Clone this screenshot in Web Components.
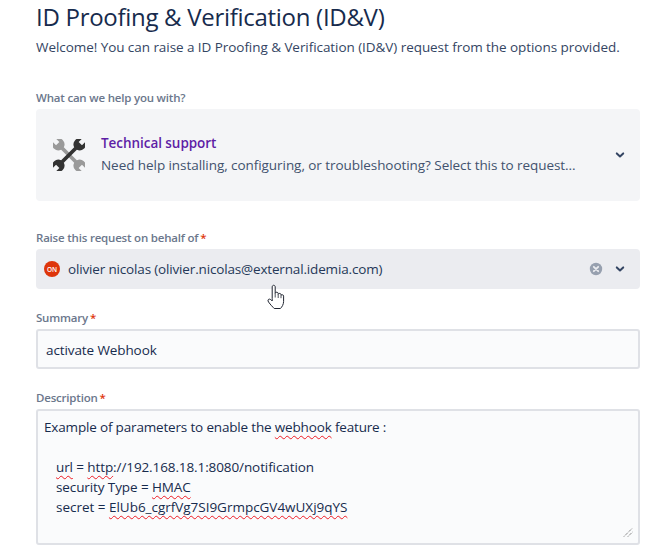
<!DOCTYPE html>
<html lang="en">
<head>
<meta charset="utf-8">
<title>ID Proofing &amp; Verification (ID&amp;V)</title>
<style>
  html, body { margin: 0; background: #fff; }
  body { font-family: "Open Sans", "Noto Sans", sans-serif; color: #172b4d; height: 557px; overflow: hidden; position: relative; }
</style>
</head>
<body>
<portal-page>
  <portal-header heading="ID Proofing &amp; Verification (ID&amp;V)">Welcome! You can raise a ID Proofing &amp; Verification (ID&amp;V) request from the options provided.</portal-header>
  <form-field label="What can we help you with?" style="--gap-top:33px">
    <request-type heading="Technical support">Need help installing, configuring, or troubleshooting? Select this to request...</request-type>
  </form-field>
  <form-field label="Raise this request on behalf of" required style="--gap-top:29px">
    <user-select initials="ON">olivier nicolas (olivier.nicolas@external.idemia.com)</user-select>
  </form-field>
  <form-field label="Summary" required style="--gap-top:21px">
    <text-box>activate Webhook</text-box>
  </form-field>
  <form-field label="Description" required style="--gap-top:21px">
    <text-area>
      <div style="letter-spacing:-.17px">Example of parameters to enable the <u>webhook</u> feature :</div>
      <div>&nbsp;</div>
      <div class="in"><u>url</u> = <u>http</u>://192.168.18.1:8080/notification</div>
      <div class="in">security Type = <u>HMAC</u></div>
      <div class="in" style="letter-spacing:-.02px">secret = <u>ElUb6_cgrfVg7SI9GrmpcGV4wUXj9qYS</u></div>
    </text-area>
  </form-field>
</portal-page>
<hand-cursor></hand-cursor>

<script>
// Contenedor de la pagina
class PortalPage extends HTMLElement {
  constructor() {
    super();
    this.attachShadow({ mode: "open" });
    this.shadowRoot.innerHTML = `
      <style>
        :host { display: block; width: 604px; padding: 0 29px 0 36px; }
      </style>
      <slot></slot>`;
  }
}

// Titulo y texto de bienvenida
class PortalHeader extends HTMLElement {
  constructor() {
    super();
    this.attachShadow({ mode: "open" });
    this.shadowRoot.innerHTML = `
      <style>
        :host { display: block; }
        h1 { margin: 0; padding-top: 1px; font-size: 24px; line-height: 32px; font-weight: 400; letter-spacing: -.29px; color: #172b4d; white-space: nowrap; }
        p { margin: 4px 0 0; font-size: 13.5px; line-height: 20px; letter-spacing: -.06px; color: #344563; white-space: nowrap; }
      </style>
      <h1></h1>
      <p><slot></slot></p>`;
  }
  connectedCallback() {
    this.shadowRoot.querySelector("h1").textContent = this.getAttribute("heading");
  }
}

// Etiqueta del campo con asterisco opcional
class FormField extends HTMLElement {
  constructor() {
    super();
    this.attachShadow({ mode: "open" });
    this.shadowRoot.innerHTML = `
      <style>
        :host { display: block; padding-top: var(--gap-top, 20px); }
        .label { font-size: 11.5px; line-height: 16px; font-weight: 600; letter-spacing: -.2px; color: #6b778c; margin-bottom: 3px; white-space: nowrap; }
        .req { color: #de350b; margin-left: 2px; }
      </style>
      <div class="label"><span class="txt"></span><span class="req"></span></div>
      <slot></slot>`;
  }
  connectedCallback() {
    this.shadowRoot.querySelector(".txt").textContent = this.getAttribute("label");
    if (this.hasAttribute("required")) this.shadowRoot.querySelector(".req").textContent = "*";
  }
}

const CHEVRON = `<svg width="16" height="16" viewBox="0 0 16 16"><path d="M4.800 6.400 8 9.400l3.200-3" fill="none" stroke="#344563" stroke-width="2" stroke-linecap="round" stroke-linejoin="round"/></svg>`;

const WRENCH = "M-9.8-2H9.8A6.5 6.5 0 0 1 22-2.5H17V2.5H22A6.5 6.5 0 0 1 9.8 2H-9.8A6.5 6.5 0 0 1-22 2.5H-17V-2.5H-22A6.5 6.5 0 0 1-9.8-2Z";

// Selector del tipo de solicitud
class RequestType extends HTMLElement {
  constructor() {
    super();
    this.attachShadow({ mode: "open" });
    this.shadowRoot.innerHTML = `
      <style>
        :host { display: flex; align-items: center; height: 92px; box-sizing: border-box; background: #f4f5f7; border-radius: 4px; padding: 0 12px 0 17px; }
        svg.icon { flex: none; margin-right: 16px; }
        .body { flex: 1; min-width: 0; padding-bottom: 3px; }
        .title { font-size: 13.5px; line-height: 20px; font-weight: 600; letter-spacing: -.05px; color: #5e1ea6; }
        .desc { font-size: 13.5px; line-height: 20px; margin-top: 2px; letter-spacing: -.06px; color: #42526e; white-space: nowrap; overflow: hidden; }
        .chev { flex: none; display: flex; }
      </style>
      <svg class="icon" width="32" height="32" viewBox="-17 -17 34 34">
        <path d="${WRENCH}" fill="#9a9a9a" transform="rotate(45)"/>
        <path d="${WRENCH}" fill="#333" transform="rotate(-45)"/>
      </svg>
      <div class="body">
        <div class="title"></div>
        <div class="desc"><slot></slot></div>
      </div>
      <span class="chev">${CHEVRON}</span>`;
  }
  connectedCallback() {
    this.shadowRoot.querySelector(".title").textContent = this.getAttribute("heading");
  }
}

// Selector de usuario con avatar
class UserSelect extends HTMLElement {
  constructor() {
    super();
    this.attachShadow({ mode: "open" });
    this.shadowRoot.innerHTML = `
      <style>
        :host { display: flex; align-items: center; height: 40px; box-sizing: border-box; background: #ebecf0; border-radius: 4px; padding: 0 12px 0 8px; font-size: 13.5px; letter-spacing: -.16px; color: #253858; }
        .avatar { flex: none; width: 16px; height: 16px; border-radius: 50%; background: #de350b; color: #fff; font-size: 6.5px; font-weight: 600; letter-spacing: 0; display: flex; align-items: center; justify-content: center; margin-right: 8px; }
        .name { flex: 1; white-space: nowrap; overflow: hidden; }
        .clear { flex: none; display: flex; margin-right: 8px; }
        .chev { flex: none; display: flex; }
      </style>
      <span class="avatar"></span>
      <span class="name"><slot></slot></span>
      <span class="clear"><svg width="16" height="16" viewBox="0 0 16 16"><circle cx="8" cy="8" r="6.2" fill="#97a0af"/><path d="M5.8 5.8l4.4 4.4m0-4.4-4.4 4.4" stroke="#ebecf0" stroke-width="1.8" stroke-linecap="round"/></svg></span>
      <span class="chev">${CHEVRON}</span>`;
  }
  connectedCallback() {
    this.shadowRoot.querySelector(".avatar").textContent = this.getAttribute("initials");
  }
}

// Campo de texto de una linea
class TextBox extends HTMLElement {
  constructor() {
    super();
    this.attachShadow({ mode: "open" });
    this.shadowRoot.innerHTML = `
      <style>
        :host { display: flex; align-items: center; height: 40px; box-sizing: border-box; background: #fafbfc; border: 2px solid #dfe1e6; border-radius: 3px; padding: 1px 8px 0; font-size: 13.5px; letter-spacing: -.1px; color: #172b4d; }
      </style>
      <slot></slot>`;
  }
}

// Area de texto con marcas de ortografia
class TextArea extends HTMLElement {
  constructor() {
    super();
    this.attachShadow({ mode: "open" });
    this.shadowRoot.innerHTML = `
      <style>
        :host { display: block; position: relative; height: 136px; box-sizing: border-box; background: #fafbfc; border: 2px solid #dfe1e6; border-radius: 3px; padding: 6px 6px; font-size: 13.5px; line-height: 20px; letter-spacing: -.1px; color: #172b4d; white-space: nowrap; }
        ::slotted(div) { height: 20px; }
        ::slotted(.in) { padding-left: 12px; }
        .grip { position: absolute; right: 5px; bottom: 6px; }
      </style>
      <slot></slot>
      <svg class="grip" width="10" height="10" viewBox="0 0 10 10"><path d="M1 9.5 9.500 1M5 9.500 9.500 5" stroke="#555" stroke-width="1" stroke-dasharray="1 1" fill="none"/></svg>`;
  }
}

// Puntero de mano sobre el selector de usuario
class HandCursor extends HTMLElement {
  constructor() {
    super();
    this.attachShadow({ mode: "open" });
    this.shadowRoot.innerHTML = `
      <style>
        :host { position: absolute; left: 267px; top: 284px; width: 18px; height: 26px; display: block; }
      </style>
      <svg width="18" height="26" viewBox="0 0 18 26"><path d="M5.2 14.5V3c0-2.3 3-2.3 3 0v6.4c.2-1.6 2.9-1.6 3 0v1c.3-1.4 2.700-1.300 2.800.2v.8c.4-1 2.600-.9 2.600.7v5.300c0 3-1.600 5.600-3.200 7.100H7.200C5.700 23 3.600 20.800 1.600 18.100.4 16.500 1.100 15.100 2.400 15.100c.9 0 1.800.8 2.800 1.900z" fill="#fff" stroke="#1f2430" stroke-width="1" stroke-linejoin="round"/><path d="M8.200 9.500v4M11.200 10.400v3.600M14 11.400v2.800" stroke="#1f2430" stroke-width=".8" fill="none"/></svg>`;
  }
}

window.customElements.define("portal-page", PortalPage);
window.customElements.define("portal-header", PortalHeader);
window.customElements.define("form-field", FormField);
window.customElements.define("request-type", RequestType);
window.customElements.define("user-select", UserSelect);
window.customElements.define("text-box", TextBox);
window.customElements.define("text-area", TextArea);
window.customElements.define("hand-cursor", HandCursor);
</script>
<style>
  text-area u { text-decoration: underline wavy #ee1c25 1px; text-underline-offset: 3px; }
</style>
</body>
</html>
